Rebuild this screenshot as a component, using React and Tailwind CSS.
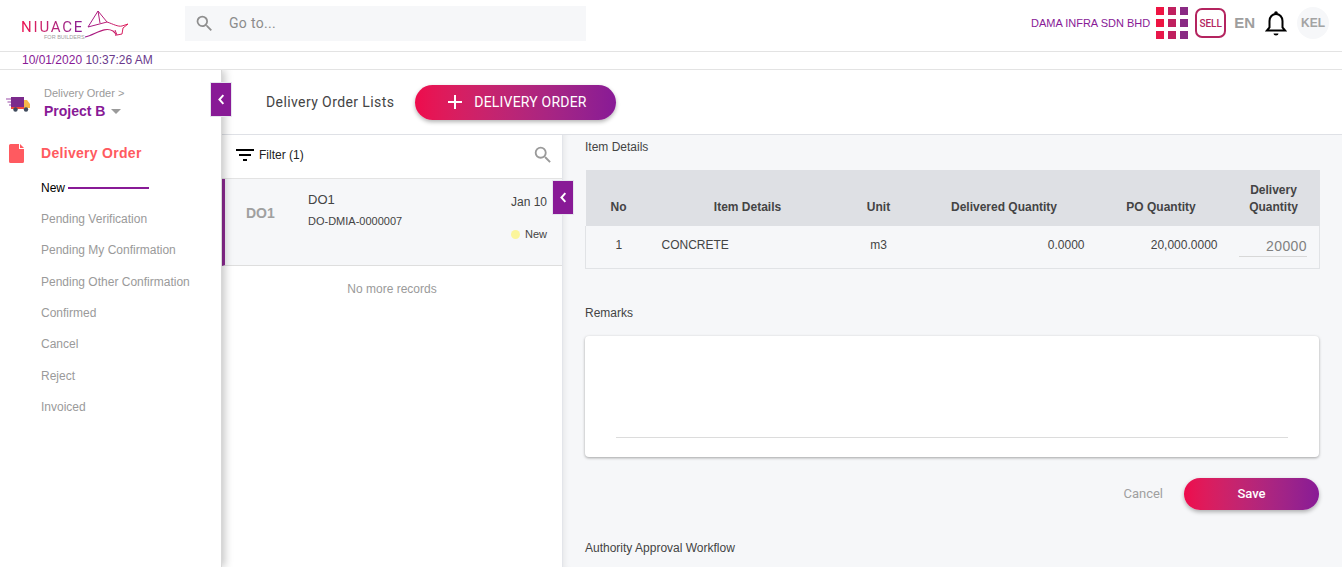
const gradient = 'bg-gradient-to-r from-[#ee0a4c] to-[#881a96]'

function SearchIcon({ className }) {
  return (
    <svg viewBox="0 0 24 24" className={className} fill="currentColor">
      <path d="M15.5 14h-.79l-.28-.27A6.47 6.47 0 0 0 16 9.5 6.5 6.5 0 1 0 9.5 16c1.61 0 3.09-.59 4.23-1.57l.27.28v.79l5 4.99L20.49 19l-4.99-5zm-6 0C7.01 14 5 11.99 5 9.5S7.01 5 9.5 5 14 7.01 14 9.5 11.99 14 9.5 14z" />
    </svg>
  )
}

function Logo() {
  return (
    <div className="relative w-[110px] h-[32px] ml-[21px]">
      <span className="absolute left-0 top-[13px] font-['Roboto',sans-serif] text-[15px] leading-[14px] tracking-[1.8px] text-transparent bg-clip-text bg-gradient-to-r from-[#ee0a4c] to-[#881a96]">NIUACE</span>
      <span className="absolute left-[23px] top-[27px] text-[5.500px] leading-[6px] text-[#a0a0a0]">FOR BUILDERS</span>
      <svg viewBox="21 7 110 32" className="absolute left-0 top-0 w-[110px] h-[32px]" fill="none" strokeWidth="1">
        <defs>
          <linearGradient id="logoLine" gradientUnits="userSpaceOnUse" x1="85" y1="0" x2="128" y2="0">
            <stop offset="0" stopColor="#9a1a8c" />
            <stop offset="1" stopColor="#e0205a" />
          </linearGradient>
        </defs>
        <path stroke="url(#logoLine)" d="M88 27 98 11 107 22 88 27M98 11l2 12" />
        <path stroke="url(#logoLine)" d="M107 22c6 2 11 5 15 4l6-2-5 4-1 6-5 1-2-5" />
        <path stroke="url(#logoLine)" strokeWidth="1.200" d="M85 37c10-2 19-11 28-6 3 2 3 4 3 5" />
      </svg>
    </div>
  )
}

function Grid() {
  const colors = ['#ee1443', '#c0205f', '#8a2a84', '#ee1443', '#c0205f', '#8a2a84', '#e8174a', '#c0205f', '#8a2a84']
  return (
    <div className="grid grid-cols-3 gap-[4px]">
      {colors.map((c, i) => (
        <div key={i} className="w-[8px] h-[8px]" style={{ backgroundColor: c }} />
      ))}
    </div>
  )
}

function Header() {
  return (
    <header className="h-[52px] pb-[5px] flex items-center border-b border-[#e3e3e3] bg-white">
      <div className="w-[185px] shrink-0"><Logo /></div>
      <div className="w-[401px] h-[35px] bg-[#f6f7f9] flex items-center pl-[9px] text-[#8c8c8c]">
        <SearchIcon className="w-[21px] h-[21px] text-[#8f8f8f]" />
        <span className="ml-[14px] text-[14px] tracking-[0.3px] font-['Roboto',sans-serif]">Go to...</span>
      </div>
      <div className="ml-auto flex items-center pr-[13px]">
        <span className="text-[11px] text-[#881a96] mr-[6px]">DAMA INFRA SDN BHD</span>
        <Grid />
        <div className="ml-[7px] w-[31px] h-[30px] rounded-[7px] border-2 border-[#b4245f] flex items-center justify-center font-['Roboto',sans-serif] text-[10px] font-medium text-[#b4245f]">SELL</div>
        <span className="ml-[8px] text-[15px] font-bold text-[#9e9e9e]">EN</span>
        <svg viewBox="0 0 22 26" className="ml-[10px] w-[22px] h-[26px]" fill="none" stroke="black" strokeWidth="2">
          <path d="M2 20.500h18l-2.500-3V11c0-4-2.800-7-6.500-7S4.500 7 4.500 11v6.500z" />
          <circle cx="11" cy="3" r="1.800" fill="black" stroke="none" />
          <path d="M8.500 23.500h5a2.500 2 0 0 1-5 0z" fill="black" stroke="none" />
        </svg>
        <div className="ml-[10px] w-[32px] h-[32px] rounded-full bg-[#f6f7f9] flex items-center justify-center text-[12px] font-bold text-[#a3a3a3]">KEL</div>
      </div>
    </header>
  )
}

function Sidebar() {
  const items = ['Pending Verification', 'Pending My Confirmation', 'Pending Other Confirmation', 'Confirmed', 'Cancel', 'Reject', 'Invoiced']
  return (
    <aside className="relative z-10 w-[222px] shrink-0 bg-white border-r border-[#d8d8d8] shadow-[3px_0_8px_rgba(0,0,0,0.22)]">
      <div className="flex items-center pt-[17px] pl-[6px]">
        <svg viewBox="0 0 24 16" className="w-[24px] h-[16px]">
          <rect x="5" y="1" width="13" height="10" fill="#7b2a8c" />
          <path d="M18 4h3l3 4v4h-6z" fill="#f6b84a" />
          <rect x="5" y="11" width="13" height="2" fill="#ef4a3c" />
          <circle cx="9.500" cy="13.500" r="2.200" fill="#3f4a5c" />
          <circle cx="20" cy="13.500" r="2.200" fill="#3f4a5c" />
          <path d="M0 3h5M1.500 6h3.500M3 9h2" stroke="#9a4aa8" strokeWidth="1.200" />
        </svg>
        <div className="ml-[14px]">
          <div className="text-[11px] leading-[13px] text-[#9a9a9a]">Delivery Order &gt;</div>
          <div className="flex items-center text-[14px] leading-[20px] mt-[1px] font-bold text-[#881a96]">
            Project B
            <span className="ml-[6px] mt-[1px] w-0 h-0 border-x-[5px] border-x-transparent border-t-[5px] border-t-[#9a9a9a]" />
          </div>
        </div>
      </div>
      <div className="flex items-center mt-[22px] pl-[9px]">
        <svg viewBox="0 0 15 19" className="w-[15px] h-[19px]" fill="#ff5a60">
          <path d="M1.500 0H10v5h5v12.500a1.500 1.500 0 0 1-1.500 1.500h-12A1.500 1.500 0 0 1 0 17.500v-16A1.500 1.500 0 0 1 1.500 0zM11 0l4 4h-4z" />
        </svg>
        <span className="ml-[17px] text-[14px] font-bold tracking-[0.3px] text-[#ff5a60]">Delivery Order</span>
      </div>
      <div className="mt-[16px] pl-[41px] flex items-center h-[16px] text-[12px] text-black">
        New
        <span className="ml-[3px] w-[81px] h-[2px] bg-[#881a96]" />
      </div>
      <ul className="pl-[41px] pt-[7.500px] text-[12px] text-[#9a9a9a]">
        {items.map((item) => (
          <li key={item} className="h-[31.330px] flex items-center">{item}</li>
        ))}
      </ul>
      <Collapse className="absolute left-[210px] top-[12px]" />
    </aside>
  )
}

function Collapse({ className }) {
  return (
    <div className={`${className} w-[22px] h-[35px] bg-[#881a96] border border-[#e6e6ee] flex items-center justify-center z-20`}>
      <svg viewBox="0 0 10 14" className="w-[8px] h-[11px]" fill="none" stroke="white" strokeWidth="2.500">
        <path d="M8 1.500 3 7l5 5.500" />
      </svg>
    </div>
  )
}

function DeliveryList() {
  return (
    <section className="relative z-[1] w-[341px] shrink-0 bg-white border-r border-[#e3e5ea]">
      <div className="h-[44px] pb-[3px] flex items-center pl-[14px] pr-[8px] border-b border-[#e3e3e3]">
        <svg viewBox="0 0 18 14" className="w-[18px] h-[14px]" fill="black">
          <rect x="0" y="1" width="18" height="2" />
          <rect x="3" y="6" width="12" height="2" />
          <rect x="7" y="11" width="4" height="2" />
        </svg>
        <span className="ml-[5px] text-[12px] text-[#222]">Filter (1)</span>
        <SearchIcon className="ml-auto w-[22px] h-[22px] text-[#9a9a9a]" />
      </div>
      <div className="relative h-[87px] bg-[#f6f7f9] border-l-[3px] border-l-[#8e2a94] border-b border-b-[#dedede] flex text-[#444]">
        <span className="w-[83px] pl-[21px] pt-[26px] text-[14px] font-bold leading-[16px] text-[#a0a0a0]">DO1</span>
        <div className="pt-[12px]">
          <div className="text-[13px] leading-[18px]">DO1</div>
          <div className="mt-[5px] text-[11px] leading-[14px]">DO-DMIA-0000007</div>
        </div>
        <div className="ml-auto pr-[15px] pt-[15px] flex flex-col items-end">
          <span className="text-[12px] leading-[16px]">Jan 10</span>
          <div className="mt-[17px] flex items-center text-[11px] leading-[14px]">
            <span className="w-[9px] h-[9px] rounded-full bg-[#fbf59b] mr-[5px]" />
            New
          </div>
        </div>
        <Collapse className="absolute left-[327px] top-[1px]" />
      </div>
      <p className="pt-[16px] text-center text-[12px] leading-[14px] text-[#9a9a9a]">No more records</p>
    </section>
  )
}

function ItemTable() {
  return (
    <table className="w-[734px] table-fixed border-collapse text-[12px] text-[#444]">
      <colgroup>
        <col className="w-[66px]" />
        <col className="w-[192px]" />
        <col className="w-[70px]" />
        <col className="w-[181px]" />
        <col className="w-[133px]" />
        <col className="w-[92px]" />
      </colgroup>
      <thead className="bg-[#dee0e4]">
        <tr className="h-[56px] align-bottom">
          <th className="pb-[10px] font-bold">No</th>
          <th className="pb-[10px] font-bold">Item Details</th>
          <th className="pb-[10px] font-bold">Unit</th>
          <th className="pb-[10px] font-bold">Delivered Quantity</th>
          <th className="pb-[10px] font-bold">PO Quantity</th>
          <th className="pb-[10px] font-bold leading-[17px]">Delivery<br />Quantity</th>
        </tr>
      </thead>
      <tbody>
        <tr className="h-[42px] border-x border-b border-[#e1e3e6]">
          <td className="pb-[4px] text-center">1</td>
          <td className="pb-[4px] pl-[10px]">CONCRETE</td>
          <td className="pb-[4px] text-center">m3</td>
          <td className="pb-[4px] text-right pr-[10px]">0.0000</td>
          <td className="pb-[4px] text-right pr-[10px]">20,000.0000</td>
          <td className="pl-[11px] pr-[12px] pb-[2px]">
            <div className="h-[22px] border-b border-[#d8d8d8] text-right text-[14px] leading-[22px] tracking-[0.4px] text-[#808080]">20000</div>
          </td>
        </tr>
      </tbody>
    </table>
  )
}

function Details() {
  return (
    <section className="relative flex-1 bg-[#f6f7f9] shadow-[inset_6px_0_6px_-5px_rgba(0,0,0,0.08)] pl-[22px] text-[12px] text-[#444]">
      <h3 className="pt-[4px] leading-[16px]">Item Details</h3>
      <div className="mt-[15px]"><ItemTable /></div>
      <h3 className="mt-[36px] leading-[16px]">Remarks</h3>
      <div className="mt-[15px] w-[734px] h-[121px] bg-white rounded-[4px] shadow-[0_1px_3px_rgba(0,0,0,0.35)] px-[31px] pt-[101px]">
        <div className="h-px bg-[#dcdcdc]" />
      </div>
      <div className="mt-[21px] w-[734px] flex items-center justify-end font-['Roboto',sans-serif]">
        <span className="text-[13px] text-[#a0a0a0] mr-[21px]">Cancel</span>
        <button className={`w-[135px] h-[32px] rounded-full ${gradient} text-white text-[13px] font-medium shadow-[0_2px_4px_rgba(0,0,0,0.3)]`}>Save</button>
      </div>
      <h3 className="mt-[30px] leading-[16px]">Authority Approval Workflow</h3>
    </section>
  )
}

export default function App() {
  return (
    <div className="w-[1342px] h-[567px] overflow-hidden bg-white font-['Liberation_Sans',sans-serif] flex flex-col">
      <Header />
      <div className="h-[18px] border-b border-[#e3e3e3] pl-[22px] text-[12px] leading-[17px] text-[#881a96]">
        10/01/2020 <span className="text-[#6a3a8c]">10:37:26 AM</span>
      </div>
      <div className="flex flex-1 min-h-0 overflow-hidden">
        <Sidebar />
        <main className="flex-1 flex flex-col min-w-0">
          <div className="h-[65px] shrink-0 flex items-center pl-[44px] border-b border-[#dfe1e6] font-['Roboto',sans-serif]">
            <span className="text-[14px] tracking-[0.4px] text-[#444]">Delivery Order Lists</span>
            <button className={`ml-[21px] w-[201px] h-[35px] rounded-full ${gradient} text-white text-[14px] tracking-[0.2px] flex items-center pl-[33px] shadow-[0_2px_4px_rgba(0,0,0,0.3)]`}>
              <svg viewBox="0 0 14 14" className="w-[14px] h-[14px]" stroke="white" strokeWidth="2">
                <path d="M7 0v14M0 7h14" />
              </svg>
              <span className="ml-[12px]">DELIVERY ORDER</span>
            </button>
          </div>
          <div className="flex flex-1 min-h-0">
            <DeliveryList />
            <Details />
          </div>
        </main>
      </div>
    </div>
  )
}
